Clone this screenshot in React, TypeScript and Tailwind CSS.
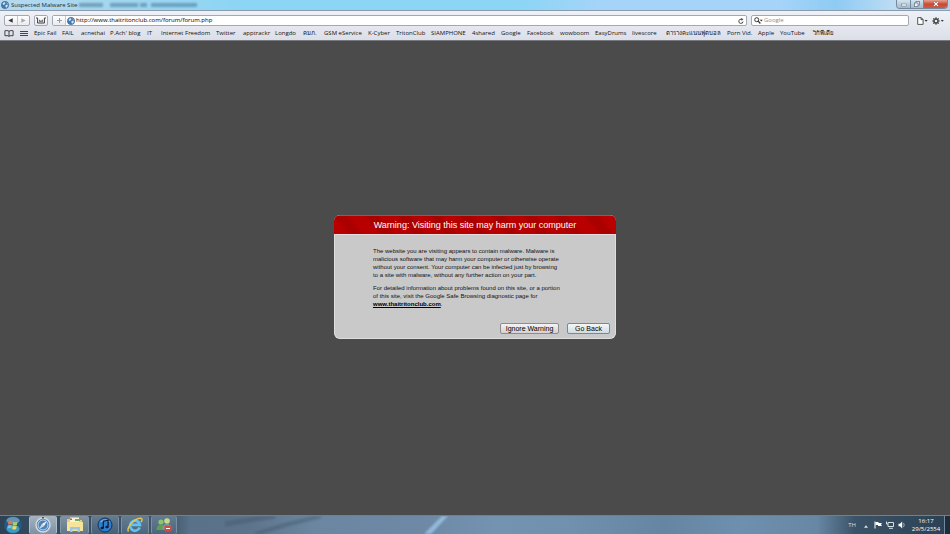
import { useState } from 'react';

const bookmarks = [
  { label: 'Epic Fail', width: 'w-[28px]' },
  { label: 'FAIL', width: 'w-[19px]' },
  { label: 'acnethai', width: 'w-[29px]' },
  { label: "P.Ach' blog", width: 'w-[37px]' },
  { label: 'IT', width: 'w-[14px]' },
  { label: 'Internet Freedom', width: 'w-[55px]' },
  { label: 'Twitter', width: 'w-[27px]' },
  { label: 'apptrackr', width: 'w-[32px]' },
  { label: 'Longdo', width: 'w-[28px]' },
  { label: 'คมภ.', width: 'w-[21px]' },
  { label: 'GSM eService', width: 'w-[44px]' },
  { label: 'K-Cyber', width: 'w-[28px]' },
  { label: 'TritonClub', width: 'w-[35px]' },
  { label: 'SIAMPHONE', width: 'w-[41px]' },
  { label: '4shared', width: 'w-[29px]' },
  { label: 'Google', width: 'w-[26px]' },
  { label: 'Facebook', width: 'w-[33px]' },
  { label: 'wowboom', width: 'w-[35px]' },
  { label: 'EasyDrums', width: 'w-[37px]' },
  { label: 'livescore', width: 'w-[34px]' },
  { label: 'ตารางคะแนนฟุตบอล', width: 'w-[61px]' },
  { label: 'Porn Vid.', width: 'w-[31px]' },
  { label: 'Apple', width: 'w-[22px]' },
  { label: 'YouTube', width: 'w-[33px]' },
  { label: 'วิกิพีเดีย', width: 'w-[24px]' }
];

const Globe = () => (
  <svg className="w-2 h-2 shrink-0" viewBox="0 0 16 16">
    <circle cx="8" cy="8" r="7.5" fill="#3b78b8" />
    <path d="M3 4l4-2 2 2-2 3-3 1zM9 8l4-1 1 3-3 4-2-2zM11 2l3 3-2 1z" fill="#cfe6f5" />
    <circle cx="8" cy="8" r="7" fill="none" stroke="#56718e" strokeWidth="1.4" />
  </svg>
);

const TitleBar = () => (
  <div className="flex items-start justify-between h-[11px] border-b border-[#8a9cad] bg-[linear-gradient(90deg,#b5d9ee_0%,#a2d6f0_12%,#8dd5f5_25%,#8dd5f5_55%,#a6d4f9_64%,#a6d4f9_82%,#8ecbf3_88%,#bcdcf3_94%,#b5d4ea_100%)]">
    <div className="flex items-center gap-[2px] h-[10px] pl-[1px] text-[6px] leading-[10px] text-[#1c2733] whitespace-nowrap">
      <Globe />
      <span>Suspected Malware Site</span>
      <span aria-hidden="true" className="w-[118px] h-1 bg-[linear-gradient(90deg,#3f7088_0_20%,transparent_20%_26%,#3f7088_26%_50%,transparent_50%_52%,#3f7088_52%_58%,transparent_58%_61%,#3f7088_61%)] opacity-50 blur-[1px]" />
    </div>
    <div className="flex h-[9px] mr-[2px] border border-t-0 border-[#75899b] rounded-b-sm overflow-hidden">
      <button aria-label="Minimize" className="flex items-center justify-center w-[14px] bg-linear-to-b from-[#d3e4f1] to-[#9fbace] border-r border-[#75899b]">
        <svg className="w-[6px] h-[6px]" viewBox="0 0 6 6">
          <rect x="0.5" y="3" width="5" height="2" fill="#fff" stroke="#5f6e7d" strokeWidth="0.5" />
        </svg>
      </button>
      <button aria-label="Restore" className="flex items-center justify-center w-[13px] bg-linear-to-b from-[#d3e4f1] to-[#9fbace] border-r border-[#75899b]">
        <svg className="w-[6px] h-[6px]" viewBox="0 0 6 6" fill="#eef5fa" stroke="#5f6e7d" strokeWidth="0.7">
          <rect x="2" y="0.5" width="3.5" height="3.5" />
          <rect x="0.5" y="2" width="3.5" height="3.5" />
        </svg>
      </button>
      <button aria-label="Close" className="flex items-center justify-center w-[23px] bg-linear-to-b from-[#e2a294] via-[#cb4a34] to-[#cf5a41]">
        <svg className="w-[6px] h-[6px]" viewBox="0 0 6 6">
          <path d="M1 1l4 4M5 1L1 5" stroke="#7b2a20" strokeWidth="2" />
          <path d="M1 1l4 4M5 1L1 5" stroke="#fff" strokeWidth="1.2" />
        </svg>
      </button>
    </div>
  </div>
);

const Toolbar = () => {
  const [url, setUrl] = useState('http://www.thaitritonclub.com/forum/forum.php');
  const [query, setQuery] = useState('');

  return (
    <div className="flex items-center h-[18px] pt-[1px] pl-1 pr-[6px]">
      <div className="flex h-[11px] w-[26px] border border-[#a3a8b1] rounded-xs bg-linear-to-b from-white to-[#e9ebf0]">
        <button aria-label="Back" className="flex flex-1 items-center justify-center border-r border-[#c3c7ce]">
          <svg className="w-[5px] h-[5px]" viewBox="0 0 5 5"><path d="M0.3 2.5L4.7 0.3v4.4z" fill="#333" /></svg>
        </button>
        <button aria-label="Forward" className="flex flex-1 items-center justify-center">
          <svg className="w-[5px] h-[5px]" viewBox="0 0 5 5"><path d="M4.7 2.5L0.3 0.3v4.4z" fill="#a5a8ae" /></svg>
        </button>
      </div>
      <button aria-label="Top Sites" className="flex items-center justify-center w-[14px] h-[11px] ml-1 border border-[#a3a8b1] rounded-xs bg-linear-to-b from-white to-[#e9ebf0]">
        <svg className="w-[10px] h-[7px]" viewBox="0 0 10 7" fill="none" stroke="#3c3c3c">
          <path d="M0 1h1.6v5h6.8V1H10" strokeWidth="1" />
          <path d="M3.6 3.8v-1M6.4 3.8v-1M3 4.2h4" strokeWidth="0.9" />
        </svg>
      </button>
      <div className="flex flex-1 h-[11px] ml-1 border border-[#a3a8b1] rounded-xs bg-white overflow-hidden">
        <button aria-label="Add bookmark" className="flex items-center justify-center w-[13px] bg-linear-to-b from-white to-[#e9ebf0] border-r border-[#c3c7ce]">
          <svg className="w-[5px] h-[5px]" viewBox="0 0 5 5"><path d="M2.5 0v5M0 2.5h5" stroke="#999ca3" /></svg>
        </button>
        <div className="flex flex-1 items-center gap-[1px] pl-[1px]">
          <Globe />
          <input
            type="text"
            aria-label="Address"
            className="flex-1 h-[9px] min-w-0 text-[6px] leading-[9px] text-black outline-none"
            value={url}
            onChange={(e) => setUrl(e.target.value)}
          />
        </div>
        <button aria-label="Reload" className="flex items-center justify-center w-[11px]">
          <svg className="w-[6px] h-[6px]" viewBox="0 0 12 12">
            <path d="M10 7A4.2 4.2 0 1 1 7 2.6" fill="none" stroke="#333" strokeWidth="1.8" />
            <path d="M6.5 0l4.3 2.6-4 3z" fill="#333" />
          </svg>
        </button>
      </div>
      <div className="flex items-center w-[158px] h-[11px] ml-1 pl-[2px] border border-[#a3a8b1] rounded-xs bg-white">
        <svg className="w-[9px] h-[7px] shrink-0" viewBox="0 0 9 7">
          <circle cx="2.7" cy="2.7" r="2" fill="none" stroke="#333" strokeWidth="1" />
          <path d="M4.2 4.2l2.2 2.3" stroke="#333" strokeWidth="1.2" />
          <path d="M5.8 2.8h3L7.3 4.4z" fill="#333" />
        </svg>
        <input
          type="text"
          aria-label="Search"
          placeholder="Google"
          className="flex-1 h-[9px] min-w-0 pl-[1px] text-[6px] leading-[9px] placeholder:text-[#8c8c8c] outline-none"
          value={query}
          onChange={(e) => setQuery(e.target.value)}
        />
      </div>
      <button aria-label="Page menu" className="ml-2">
        <svg className="w-[11px] h-2" viewBox="0 0 11 8">
          <path d="M0.7 0.6h3.5l1.9 1.9v4.9H0.7zM4 0.6v2h2" fill="#fff" stroke="#444" strokeWidth="0.9" />
          <path d="M7.5 3h3.2L9.1 4.8z" fill="#333" />
        </svg>
      </button>
      <button aria-label="Settings" className="ml-1">
        <svg className="w-[12px] h-2" viewBox="0 0 12 8">
          <path d="M4 0.2v7.6M0.2 4h7.6M1.3 1.3l5.4 5.4M6.7 1.3L1.3 6.7" stroke="#444" strokeWidth="1.2" />
          <circle cx="4" cy="4" r="2" fill="#e9ebf0" stroke="#444" strokeWidth="1.4" />
          <path d="M8.7 3h3.1l-1.5 1.8z" fill="#333" />
        </svg>
      </button>
    </div>
  );
};

const BookmarksBar = () => (
  <nav className="flex items-center h-[11px] pl-1 pb-[2px] text-[6px] leading-[9px] text-[#111] whitespace-nowrap">
    <button aria-label="Show all bookmarks" className="mr-[6px]">
      <svg className="w-[10px] h-[7px]" viewBox="0 0 10 7" fill="none" stroke="#333" strokeWidth="0.9">
        <path d="M5 1.2Q3 0 0.9 0.8v4.9H4L5 6.5l1-0.8h3.1V0.8Q7 0 5 1.2zM5 1.2v5" />
      </svg>
    </button>
    <button aria-label="Top sites list" className="mr-[6px]">
      <svg className="w-2 h-[7px]" viewBox="0 0 8 7">
        <path d="M0 1.5h8M0 3.5h8M0 5.5h8" stroke="#444" strokeWidth="1" />
      </svg>
    </button>
    {bookmarks.map((item) => (
      <a key={item.label} href="#" className={`shrink-0 ${item.width}`}>
        {item.label}
      </a>
    ))}
  </nav>
);

const Warning = () => (
  <section className="w-[282px] rounded-md bg-[#c9c9c9] overflow-hidden font-['Liberation_Sans',Arial,sans-serif]">
    <h1 className="h-5 border-t border-b border-t-[#c9403c] border-b-[#e6dede] bg-[repeating-linear-gradient(50deg,#b80000_0_10px,#aa0000_14px_20px,#b80000_24px)] text-center text-[9px] leading-[19px] text-white">
      Warning: Visiting this site may harm your computer
    </h1>
    <div className="border border-t-0 border-[#dedede] rounded-b-md">
      <div className="pt-3 pl-[38px] text-[6px] leading-[8px] text-[#111] whitespace-nowrap">
        <p>
          The website you are visiting appears to contain malware. Malware is<br />
          malicious software that may harm your computer or otherwise operate<br />
          without your consent. Your computer can be infected just by browsing<br />
          to a site with malware, without any further action on your part.
        </p>
        <p className="mt-[5px]">
          For detailed information about problems found on this site, or a portion<br />
          of this site, visit the Google Safe Browsing diagnostic page for<br />
          <a href="#" className="font-bold underline text-black">www.thaitritonclub.com</a>.
        </p>
      </div>
      <div className="flex justify-end gap-2 mt-[15px] pr-[5px] pb-[4px] text-[7px] leading-[9px] text-black">
        <button className="w-[59px] h-[11px] border border-[#8c8c8c] rounded-xs bg-linear-to-b from-[#f4f4f4] to-[#d2d2d2]">
          Ignore Warning
        </button>
        <button className="w-[43px] h-[11px] border border-[#3f9cc8] rounded-xs bg-linear-to-b from-[#f4f6f7] to-[#cfdce3]">
          Go Back
        </button>
      </div>
    </div>
  </section>
);

const SafariIcon = () => (
  <svg className="w-4 h-4" viewBox="0 0 16 16">
    <circle cx="8" cy="8" r="7" fill="#4d82b8" stroke="#d3d9de" strokeWidth="1.5" />
    <circle cx="8" cy="8" r="5" fill="none" stroke="#b9d6ec" strokeWidth="1" />
    <path d="M12 4L9 9.2 6.8 7z" fill="#f2f5f7" />
    <path d="M4 12l5-2.8L6.8 7z" fill="#cfd8e0" />
    <path d="M7 0h2v1.5H7z" fill="#4a5560" />
  </svg>
);

const ExplorerIcon = () => (
  <svg className="w-[18px] h-4" viewBox="0 0 18 16">
    <path d="M1 2h6l1 1h8v11H1z" fill="#e9ce6d" />
    <path d="M4 0.5h9v5H4z" fill="#f7f3d8" />
    <path d="M9 2h5v2H9z" fill="#6fae5c" />
    <path d="M4 1.5h2v1.5H4z" fill="#d0533c" />
    <path d="M1 5h16v9H1z" fill="#f6e49b" />
    <path d="M4 15v-5h10v5h-2.5v-2.5h-5V15z" fill="#9cc7dd" />
  </svg>
);

const ITunesIcon = () => (
  <svg className="w-4 h-4" viewBox="0 0 16 16">
    <circle cx="8" cy="8" r="7" fill="#2f7fd0" stroke="#14315a" />
    <path d="M3 5a6 6 0 0 1 10 0z" fill="#75b5ea" />
    <path d="M6.3 11V4.4l4.8-1v6.3" fill="none" stroke="#0d1d38" strokeWidth="1.3" />
    <ellipse cx="5.2" cy="11" rx="1.7" ry="1.3" fill="#0d1d38" />
    <ellipse cx="10" cy="10" rx="1.7" ry="1.3" fill="#0d1d38" />
  </svg>
);

const IEIcon = () => (
  <svg className="w-4 h-4" viewBox="0 0 16 16" fill="none">
    <path d="M12.7 10.6A5 5 0 1 1 13 7.9H4.5" stroke="#62c3f2" strokeWidth="2.6" />
    <path d="M1.5 14.5C-1 11 7 1.5 13.5 1.2c2.3 0 1.8 2.3 0.6 4" stroke="#f2c94a" strokeWidth="1.3" />
  </svg>
);

const PeopleIcon = () => (
  <svg className="w-4 h-4" viewBox="0 0 16 16">
    <circle cx="5" cy="5" r="2.6" fill="#8fc36c" />
    <path d="M0.5 13c0-7 9-7 9 0z" fill="#5f9f4d" />
    <circle cx="11" cy="4" r="2.8" fill="#c6dc8c" />
    <path d="M6.5 12c0-7 9-7 9 0z" fill="#6fa3a8" />
    <rect x="8.5" y="8.5" width="7" height="6" rx="1" fill="#d64a45" />
    <path d="M10 11.5h4" stroke="#fff" />
  </svg>
);

const taskButtons = [
  { name: 'Safari', icon: <SafariIcon />, className: 'w-[28px] ml-1 bg-linear-to-b from-[#a5b3bf] to-[#7d91a2] border-[#afbdc8]' },
  { name: 'Windows Explorer', icon: <ExplorerIcon />, className: 'w-[29px] ml-[3px] bg-linear-to-b from-[#8193a2] to-[#607789] border-[#8596a5]' },
  { name: 'iTunes', icon: <ITunesIcon />, className: 'w-[28px] ml-[2px] bg-linear-to-b from-[#657c8f] to-[#455f76] border-[#7b8fa0]' },
  { name: 'Internet Explorer', icon: <IEIcon />, className: 'w-[28px] ml-[2px] bg-linear-to-b from-[#657c8f] to-[#4c667d] border-[#7b8fa0]' },
  { name: 'Messenger', icon: <PeopleIcon />, className: 'w-[26px] ml-[2px] bg-linear-to-b from-[#657c8f] to-[#4c667d] border-[#7b8fa0]' }
];

const Taskbar = () => (
  <footer className="flex items-stretch h-[19px] border-t border-[#70808e] bg-[linear-gradient(90deg,#2d4355_0%,#334a5e_3%,#41586c_18%,#597189_20%,#5c748a_26%,#6b86a1_33%,#6d89a5_45%,#7493b1_52%,#7190ad_60%,#6685a3_70%,#6e8fae_78%,#6887a4_86%,#3b5368_90%,#2b4053_100%)]">
    <button aria-label="Start" className="flex items-center justify-center w-[25px]">
      <svg className="w-[18px] h-[18px]" viewBox="0 0 18 18">
        <circle cx="9" cy="9" r="8.7" fill="#265a82" />
        <ellipse cx="9" cy="13" rx="6.5" ry="4" fill="#3a9bc4" />
        <ellipse cx="9" cy="4.5" rx="6.5" ry="3.5" fill="#6695b4" />
        <path d="M4.5 5.5q2-1.3 4 0L8 8.7q-2-1-4 0z" fill="#ee7442" />
        <path d="M9.2 5.8q2 1 4.2 0l-0.5 3.2q-2 1-4.2 0z" fill="#a4d465" />
        <path d="M3.8 9.4q2-1 4 0l-0.4 3.1q-2-1-4 0z" fill="#70c4f0" />
        <path d="M8.6 9.8q2 1 4.1 0l-0.5 3.1q-2 1-4 0z" fill="#f7d65a" />
      </svg>
    </button>
    {taskButtons.map((item) => (
      <button key={item.name} aria-label={item.name} className={`flex items-center justify-center border border-y-0 rounded-xs ${item.className}`}>
        {item.icon}
      </button>
    ))}
    {/* Wallpaper showing through the glass */}
    <div className="flex flex-1 pl-[5%] overflow-hidden">
      <svg className="w-[230px] h-[18px] blur-[1px]" viewBox="0 0 230 18">
        <g fill="none" stroke="#3f5468" opacity="0.4">
          <path d="M0 8L50 0" strokeWidth="5" />
          <path d="M30 18L60 9 96 0" strokeWidth="4" />
        </g>
        <path d="M199 18L217 0h6L206 18z" fill="#98bfe0" opacity="0.9" />
      </svg>
    </div>
    <div className="flex items-center pb-[1px] text-[6px] leading-[8px] text-white">
      <span className="text-[#d5dfe6]">TH</span>
      <button aria-label="Show hidden icons" className="ml-2 pt-1">
        <svg className="w-1 h-[3px]" viewBox="0 0 4 3"><path d="M2 0.3L4 2.7H0z" fill="#dce4ea" /></svg>
      </button>
      <svg className="w-2 h-2 ml-[6px]" viewBox="0 0 8 8">
        <path d="M1 0.5v7" stroke="#fff" strokeWidth="1" />
        <path d="M1.5 1h3v1H8L7 3.3 8 5H4V4H1.5z" fill="#fff" />
      </svg>
      <svg className="w-2 h-2 ml-1" viewBox="0 0 8 8" fill="none" stroke="#e8eef2" strokeWidth="0.9">
        <path d="M2 1.5h5.5v4H2zM3 7.3h4M0.5 0.5v2.5h1.5" />
      </svg>
      <svg className="w-2 h-2 ml-1" viewBox="0 0 8 8">
        <path d="M0.5 2.7h1.5L4.2 0.4v7.2L2 5.3H0.5z" fill="#fff" />
        <path d="M5.5 2q1.5 2 0 4" fill="none" stroke="#cdd8e0" strokeWidth="0.7" />
      </svg>
      <div className="w-[36px] ml-[2px] text-center">
        <div>16:17</div>
        <div>29/5/2554</div>
      </div>
    </div>
    <button aria-label="Show desktop" className="w-[6px] border-l border-[#76889a] bg-[#1c2d3c]" />
  </footer>
);

const App = () => {
  return (
    <div className="flex flex-col min-h-screen bg-[#4b4b4b] font-['Open_Sans','Noto_Sans',sans-serif]">
      <header>
        <TitleBar />
        <div className="bg-linear-to-b from-[#eef1f6] to-[#dcdfe8] border-b border-[#77797e]">
          <Toolbar />
          <BookmarksBar />
        </div>
      </header>
      <main className="flex flex-1 items-center justify-center pb-[2px]">
        <Warning />
      </main>
      <Taskbar />
    </div>
  );
};

export default App;
